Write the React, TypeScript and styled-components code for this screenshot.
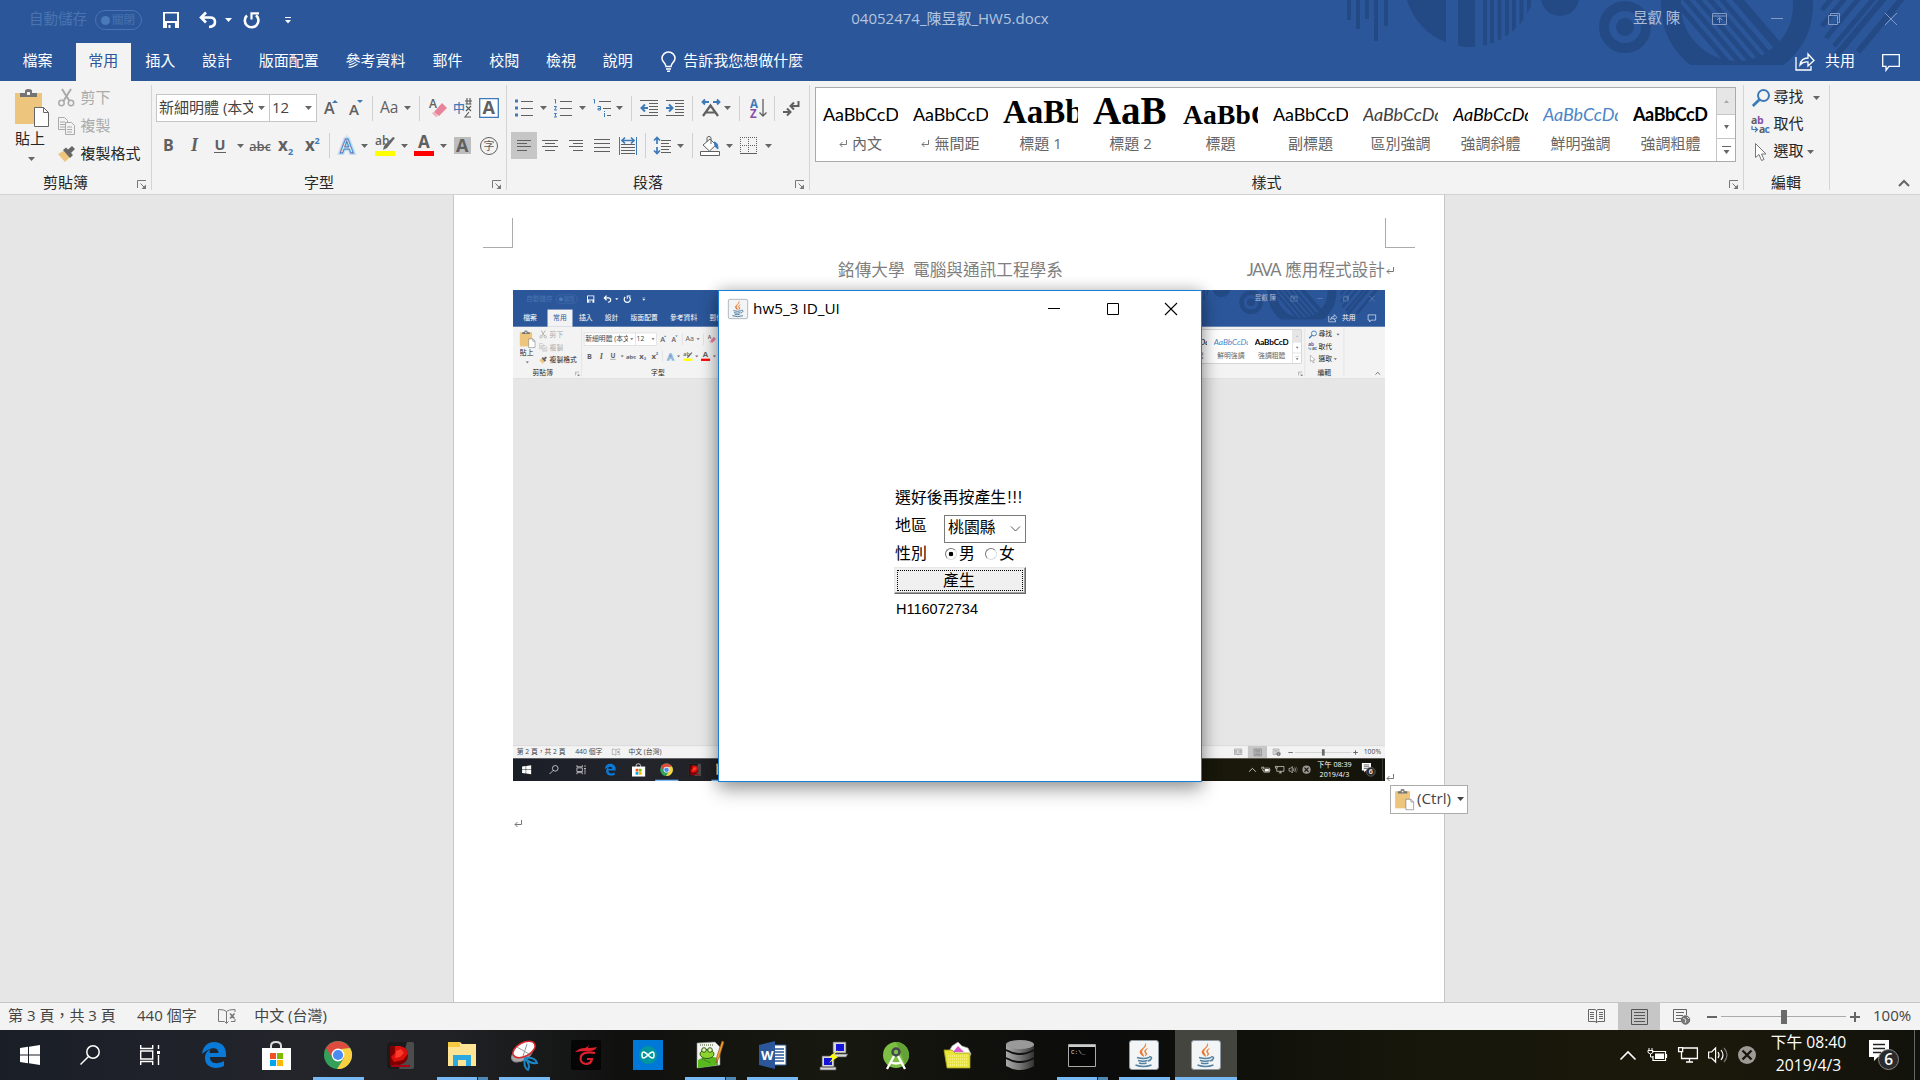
import React from "react";
import styled, { createGlobalStyle, css } from "styled-components";

const UI = `"Open Sans", "Noto Sans CJK TC", sans-serif`;
const INK = "#606060";
const BLUE = "#3d7ab8";

const Global = createGlobalStyle`
  *, *::before, *::after { box-sizing: border-box; }
  body { margin: 0; background: #e6e6e6; overflow: hidden; }
  svg { display: block; overflow: visible; flex: none; }
`;

/* ---------- shell ---------- */

const Screen = styled.div`
  width: 1920px;
  height: 1080px;
  display: flex;
  flex-direction: column;
  position: relative;
  overflow: hidden;
  font-family: ${UI};
  font-size: 15px;
  line-height: 1;
  color: #262626;
  white-space: nowrap;
  background: #e6e6e6;
`;
const Head = styled.header`
  position: relative;
  height: 81px;
  flex: none;
  background: #2b579a;
  color: #fff;
`;
const Decor = styled.svg`
  position: absolute;
  left: 1340px;
  top: 0;
`;
const TitleBar = styled.div`
  position: relative;
  display: grid;
  grid-template-columns: 700px 1fr 700px;
  height: 38px;
  align-items: center;
`;
const Quick = styled.div`
  display: flex;
  align-items: center;
  padding: 2px 0 0 29px;
  height: 38px;
`;
const AutoSave = styled.span`
  color: #4a74b0;
  font-size: 14.5px;
  width: 66px;
  padding-bottom: 2px;
`;
const Pill = styled.span`
  display: flex;
  align-items: center;
  gap: 2px;
  width: 47px;
  height: 20px;
  border: 1px solid #4a74b0;
  border-radius: 10px;
  color: #4a74b0;
  font-size: 11.5px;
  padding-left: 5px;
  margin-right: 21px;
  &::before {
    content: "";
    width: 9px;
    height: 9px;
    border-radius: 50%;
    background: #4a7ab8;
  }
`;
const DocName = styled.div`
  text-align: center;
  color: #b5c5de;
  padding: 0 20px 2px 0;
`;
const WinTools = styled.div`
  display: flex;
  align-items: center;
  padding-left: 413px;
  color: #a9bcd9;
  font-size: 14.5px;
`;
const UserName = styled.span`
  width: 50px;
  padding-bottom: 2px;
`;
const Tabs = styled.nav`
  position: relative;
  display: flex;
  height: 38px;
  margin-top: 5px;
  padding-left: 10px;
  gap: 1.8px;
`;
const Tab = styled.span<{ $on?: boolean; $first?: boolean }>`
  display: flex;
  align-items: center;
  height: 38px;
  padding: 0 12.5px 4px;
  color: #fff;
  ${(p) => p.$first && css`margin-right: 9px;`}
  ${(p) => p.$on && css`background: #f3f3f3; color: #2b579a;`}
`;
const Tell = styled.span`
  display: flex;
  align-items: center;
  gap: 7px;
  margin-left: 14px;
  > span { padding-bottom: 3px; }
`;
const Share = styled.span`
  display: flex;
  align-items: center;
  margin-left: auto;
  padding-right: 20px;
  gap: 10px;
  > span:nth-child(2) { padding-bottom: 3px; }
`;

/* ---------- ribbon ---------- */

const Ribbon = styled.section`
  position: relative;
  display: flex;
  height: 114px;
  flex: none;
  background: #f3f3f3;
  border-bottom: 1px solid #d2d2d2;
`;
const Group = styled.div<{ $w: number; $pad?: number }>`
  width: ${(p) => p.$w}px;
  padding: ${(p) => (p.$pad ?? 13)}px 0 0 4px;
  display: flex;
  flex-direction: column;
  height: 113px;
  background: linear-gradient(#d4d4d4, #d4d4d4) no-repeat right 4px / 1px 105px;
`;
const Row = styled.div<{ $h?: number; $top?: number }>`
  display: flex;
  align-items: center;
  height: ${(p) => p.$h ?? 28}px;
  margin-top: ${(p) => p.$top ?? 0}px;
`;
const GroupFoot = styled.div<{ $shift: boolean }>`
  display: grid;
  grid-template-columns: 1fr auto 1fr;
  align-items: center;
  height: 22px;
  margin-top: auto;
  padding-right: ${(p) => (p.$shift ? 25 : 6)}px;
  span { padding-bottom: 2px; }
  svg { justify-self: end; margin: 4px -20px 0 0; }
`;
const Tool = styled.span<{ $g?: number; $w: number }>`
  display: flex;
  flex: none;
  justify-content: center;
  margin-left: ${(p) => p.$g ?? 0}px;
  width: ${(p) => p.$w}px;
`;
const Sep = styled.span<{ $g?: number }>`
  flex: none;
  width: 1px;
  height: 25px;
  margin-left: ${(p) => p.$g ?? 8}px;
  background: #d0d0d0;
`;
const Combo = styled.span<{ $w: number }>`
  display: flex;
  align-items: center;
  width: ${(p) => p.$w}px;
  height: 28px;
  padding: 0 4px 0 2px;
  margin-right: -1px;
  background: #fff;
  border: 1px solid #c6c6c6;
  color: #444;
`;
const ComboText = styled.span`
  flex: 1;
  min-width: 0;
  height: 22px;
  line-height: 20px;
  overflow: hidden;
`;
const Pressed = styled(Tool)`
  height: 27px;
  align-items: center;
  background: #c6c6c6;
`;
const ClipBody = styled.div`
  display: flex;
  height: 83px;
`;
const Paste = styled.div`
  width: 54px;
  padding: 1px 0 0 11px;
  display: flex;
  flex-direction: column;
`;
const PasteText = styled.span`
  margin: 4px 0 11px;
`;
const Stack = styled.div<{ $pitch: number; $up?: number }>`
  display: flex;
  flex-direction: column;
  margin-top: -${(p) => p.$up ?? 0}px;
  > div { height: ${(p) => p.$pitch}px; flex: none; }
`;
const Cmd = styled.div<{ $off?: boolean }>`
  display: flex;
  align-items: center;
  gap: 5.5px;
  color: ${(p) => (p.$off ? "#aaa" : "#262626")};
`;
const Word = styled.span`
  width: 30px;
  padding-bottom: 2px;
`;
const Gallery = styled.div`
  display: flex;
  width: 921px;
  height: 75px;
  flex: none;
  margin-left: 1px;
  border: 1px solid #ababab;
  background: #fff;
`;
const StyleCell = styled.div`
  width: 90px;
  padding: 0 8px 0 7px;
  display: flex;
  flex-direction: column;
  align-items: center;
  overflow: hidden;
`;
const Preview = styled.div<{ $serif?: number; $lh?: number; $color?: string; $it?: boolean; $b?: boolean; $sp?: number }>`
  width: 75px;
  height: 47px;
  line-height: ${(p) => p.$lh ?? 52}px;
  overflow: hidden;
  color: ${(p) => p.$color ?? "#000"};
  font-family: ${(p) => (p.$serif ? `"Liberation Serif", serif` : `Lato, sans-serif`)};
  font-size: ${(p) => p.$serif ?? 18}px;
  font-weight: ${(p) => (p.$serif || p.$b ? 700 : 400)};
  font-style: ${(p) => (p.$it ? "italic" : "normal")};
  letter-spacing: ${(p) => p.$sp ?? -0.1}px;
`;
const StyleName = styled.div`
  display: flex;
  align-items: center;
  gap: 5px;
  color: #666;
  line-height: 17px;
`;
const Scroller = styled.div`
  width: 19px;
  display: grid;
  grid-template-rows: 26px 24px 23px;
  border-left: 1px solid #c6c6c6;
  > span { display: grid; place-items: center; }
  > span + span { border-top: 1px solid #c6c6c6; }
  > span:first-child { background: #e6e6e6; }
`;
const Collapse = styled.span`
  margin: auto 10px 7px auto;
`;

/* ---------- document ---------- */

const Canvas = styled.main`
  position: relative;
  flex: 1;
  display: flex;
  justify-content: flex-start;
  padding-left: 453px;
  overflow: hidden;
`;
const Page = styled.article`
  width: 992px;
  background: #fff;
  border: solid #c6c6c6;
  border-width: 0 1px;
  padding-top: 23px;
`;
const Marks = styled.div`
  display: flex;
  justify-content: space-between;
  margin: 0 29px;
`;
const Mark = styled.span<{ $right?: boolean }>`
  width: 30px;
  height: 30px;
  border-bottom: 1px solid #ababab;
  ${(p) => (p.$right ? css`border-left: 1px solid #ababab;` : css`border-right: 1px solid #ababab;`)}
`;
const PageHeader = styled.div`
  display: flex;
  align-items: center;
  height: 42px;
  padding: 2px 0 0 384px;
  color: #7f7f7f;
  font-size: 16.65px;
  font-family: Lato, "Noto Sans CJK TC", sans-serif;
`;
const HeaderRight = styled.span`
  margin-left: auto;
  padding-right: 50px;
  display: flex;
  align-items: center;
  gap: 1px;
`;
const Caps = styled.span`
  letter-spacing: -1.4px;
  margin-right: 4px;
`;
const PictureLine = styled.div`
  display: flex;
  align-items: flex-end;
  padding-left: 59px;
  gap: 1px;
`;
const Picture = styled.div`
  width: 872px;
  height: 491px;
  overflow: hidden;
`;
const Shrink = styled.div`
  width: 1920px;
  height: 1080px;
  transform: scale(0.4542, 0.4547);
  transform-origin: 0 0;
`;
const Para = styled.div`
  padding: 39px 0 0 60px;
`;
const PasteTag = styled.div`
  position: absolute;
  left: 1390px;
  top: 590px;
  width: 78px;
  height: 29px;
  display: flex;
  align-items: center;
  gap: 3px;
  padding: 0 0 1px 4px;
  border: 1px solid #ababab;
  background: #fff;
  color: #444;
  font-size: 15.2px;
`;

/* ---------- status bar and taskbar ---------- */

const Status = styled.footer`
  display: flex;
  align-items: center;
  height: 28px;
  flex: none;
  padding-left: 8px;
  border-top: 1px solid #c6c6c6;
  background: #f3f3f3;
  color: #444;
`;
const StatusText = styled.span<{ $w?: number }>`
  width: ${(p) => (p.$w ? `${p.$w}px` : "auto")};
  padding-bottom: 3px;
`;
const Right = styled.div`
  display: flex;
  align-items: center;
  margin-left: auto;
  height: 100%;
`;
const ViewOn = styled.span`
  width: 42px;
  height: 27px;
  display: grid;
  place-items: center;
  margin: 0 13px;
  background: #c6c6c6;
`;
const Track = styled.span`
  width: 125px;
  height: 14px;
  margin: 0 4px;
  display: grid;
  place-items: center;
  background: linear-gradient(#ababab, #ababab) no-repeat center / 100% 1px;
  &::after { content: ""; width: 6px; height: 14px; background: #6a6a6a; }
`;
const Zoomed = styled.span`
  width: 47px;
  margin-left: 13px;
  padding-bottom: 2px;
`;
const Taskbar = styled.div`
  display: flex;
  height: 50px;
  flex: none;
  background: linear-gradient(90deg, #1a1e27 0, #23252b 300px, #202124 460px, #10110f 620px, #17180f 830px, #0b0c0b 1100px, #16160b 1400px, #1b190b 1700px, #12120c 1920px);
  color: #fff;
`;
const Sys = styled.span`
  width: 60px;
  height: 50px;
  display: grid;
  place-items: center;
`;
const TaskApp = styled.span<{ $run?: 0 | 1 | 2; $on?: boolean }>`
  width: 62px;
  height: 50px;
  display: grid;
  place-items: center;
  position: relative;
  &::after {
    content: "";
    position: absolute;
    bottom: 0;
    left: ${(p) => (p.$on ? 0 : 6)}px;
    width: ${(p) => (p.$on ? 62 : p.$run ? 51 : 0)}px;
    height: 3px;
    background: ${(p) => (p.$run === 2 ? "linear-gradient(90deg,#76b9f5 40px,#222 40px,#222 41px,#4f88b5 41px)" : "#76b9f5")};
  }
  ${(p) => p.$on && css`background: #44453e;`}
`;
const Apps = styled.div`
  display: flex;
  padding-left: 3px;
`;
const Tray = styled.div`
  display: flex;
  align-items: center;
  margin-left: auto;
  height: 50px;
`;
const Clock = styled.div`
  width: 104px;
  display: flex;
  flex-direction: column;
  align-items: center;
  gap: 7px;
  padding: 0 0 1px 1px;
  font-size: 15.7px;
`;
const EdgeLine = styled.span`
  width: 6px;
  height: 50px;
  border-left: 1px solid #666;
  margin-left: 15px;
`;

/* ---------- java window ---------- */

const Window = styled.section`
  position: absolute;
  left: 718px;
  top: 290px;
  width: 484px;
  height: 492px;
  border: 1px solid #1a7fd4;
  background: #fff;
  box-shadow: 0 8px 18px rgba(0, 0, 0, 0.32), 0 0 14px rgba(0, 0, 0, 0.22);
  color: #000;
  font-family: ${UI};
  line-height: 1;
  white-space: nowrap;
`;
const WinHead = styled.div`
  display: flex;
  align-items: center;
  height: 36px;
  padding-left: 9px;
  svg + svg { margin-left: 46.5px; }
`;
const WinTitle = styled.span`
  width: 295px;
  margin-left: 5px;
  font-size: 15.3px;
  padding-bottom: 1px;
`;
const Form = styled.div`
  width: 132px;
  margin: 156px 0 0 175px;
  font-family: "Liberation Sans", "Noto Sans CJK TC", sans-serif;
  font-size: 15.9px;
`;
const Line = styled.div<{ $h: number; $drop?: number }>`
  display: flex;
  align-items: center;
  height: ${(p) => p.$h}px;
  padding: ${(p) => p.$drop ?? 0}px 0 0 1px;
`;
const Bangs = styled.span`
  letter-spacing: 0.9px;
  margin-left: 1px;
`;
const Key = styled.span<{ $up?: number }>`
  width: 49px;
  padding-bottom: ${(p) => p.$up ?? 0}px;
`;
const Select = styled.span`
  display: flex;
  align-items: center;
  justify-content: space-between;
  width: 82px;
  height: 28px;
  padding: 0 5px 1px 3px;
  border: 1px solid #7a7a7a;
  svg { margin-top: 2px; }
`;
const Radio = styled.span<{ $on?: boolean }>`
  width: 12px;
  height: 12px;
  margin: 0 2px 6px 1px;
  border-radius: 50%;
  border: 1.5px solid;
  border-color: #777 #ddd #ddd #777;
  background: ${(p) => (p.$on ? "radial-gradient(circle, #000 0 2px, #fff 2.6px)" : "#fff")};
`;
const Choice = styled.span`
  width: 25px;
  padding-bottom: 5px;
`;
const Push = styled.div`
  height: 27px;
  padding: 2px;
  background: #f0f0f0;
  border: 1px solid;
  border-color: #e8e8e8 #696969 #696969 #e8e8e8;
  box-shadow: inset -1px -1px #a0a0a0;
  margin-bottom: 5px;
`;
const PushFocus = styled.span`
  display: flex;
  justify-content: center;
  height: 21px;
  line-height: 19px;
  border: 1px dotted #000;
  padding-right: 2px;
`;
const Result = styled.div`
  padding-left: 2px;
  font-size: 14.5px;
  line-height: 20px;
`;

/* ---------- icons ---------- */

const Caret = ({ g = 6, c = "#666" }: { g?: number; c?: string }) => (
  <Tool $g={g} $w={7}><svg width="7" height="4"><path d="M0 0h7L3.500 4z" fill={c} /></svg></Tool>
);
const Ret = () => (
  <svg width="8" height="7" fill="none" stroke="#777"><path d="M7.500 0v4.500H1M3.500 2L1 4.500 3.500 7" /></svg>
);
const Launcher = () => (
  <svg width="10" height="10" fill="none" stroke="#777"><path d="M.5 8V.5H9M3.500 3.500l5 5" /><path d="M9 4.500V9H4.500z" fill="#777" stroke="none" /></svg>
);
const Txt = ({ x = 0, y, s, c = INK, b = 700, i, f = "Open Sans", children }: any) => (
  <text x={x} y={y} fontSize={s} fill={c} fontWeight={b} fontStyle={i ? "italic" : undefined} fontFamily={`${f}, "Noto Sans CJK TC", sans-serif`}>{children}</text>
);
const Lines = ({ w, rows }: { w: number; rows: [number, number, number][] }) => (
  <svg width={w} height="18" stroke={INK}>{rows.map(([y, a, b]) => <path key={y} d={`M${a} ${y + 0.5}H${b}`} />)}</svg>
);
const Clipboard = ({ w, h }: { w: number; h: number }) => (
  <svg width={w} height={h} viewBox="0 0 34 38">
    <path d="M0 4h27v31H0z" fill="#edc57c" />
    <path d="M5 8V4h5V2q0-2 3.500-2T17 2v2h5v4z" fill="#737373" /><path d="M12 3h3v3h-3z" fill="#f3f3f3" />
    <path d="M19.500 18.500h9l5 5v14h-14z" fill="#fff" stroke="#666" /><path d="M28.500 18.500v5h5" fill="none" stroke="#666" />
  </svg>
);
const Java = ({ s = 30 }: { s?: number }) => (
  <svg width={s} height={s} viewBox="0 0 30 30">
    <rect x=".5" y=".5" width="29" height="29" rx="2.500" fill="#f2f4f6" stroke="#8d9aa6" />
    <path d="M16.500 3.500c2 4-6 6-3 10 1.500 2 1 3 1 3-4-3-5-5-1-8 2-2 3-3 3-5zM18.500 8.500c-4 2-3 3-2 5 .8 1.500-.5 2.500-.5 2.500 4-2 .5-3.500.5-4.500s1-2 2-3z" fill="#e7762c" stroke="#e7762c" strokeWidth=".5" />
    <path d="M8 17.500q7 2 12 0M9 20.500q6 1.500 9.500 0M10 23q4 1.200 7.500 0M20 17c4-1 3 3-1 4M6.500 25q8 3 16 0" fill="none" stroke="#5382a1" strokeWidth="1.500" />
  </svg>
);

function Decoration() {
  return (
    <Decor width="580" height="81" viewBox="1340 0 580 81" fill="#244a86">
      <defs>
        <clipPath id="orb"><circle cx="1470" cy="-18.700" r="65.700" /></clipPath>
        <clipPath id="bowl"><path d="M1640 0h200v65h-200z" /></clipPath>
        <clipPath id="bowlIn"><circle cx="1737" cy="5" r="57" /></clipPath>
        <clipPath id="corner"><path d="M1820 0h100v60h-100z" /></clipPath>
      </defs>
      <path d="M1347 0h4v20h-4zM1356 0h4v29h-4zM1365 0h4v19h-4zM1374 0h4v41h-4zM1384 0h4v26h-4z" />
      <g clipPath="url(#orb)"><path d="M1400 0h46v50h-46zM1458 0h17v50h-17zM1483 0h4v50h-4zM1490 0h4v50h-4zM1497.500 0h4v50h-4zM1505 0h4v50h-4zM1512 0h4v50h-4zM1519.500 0h4v50h-4zM1527 0h4v50h-4z" /></g>
      <circle cx="1560" cy="-3" r="19" />
      <circle cx="1625" cy="27" r="21" fill="none" stroke="#244a86" strokeWidth="10" /><circle cx="1625" cy="27" r="9" />
      <g clipPath="url(#bowl)"><circle cx="1737" cy="5" r="66" fill="none" stroke="#244a86" strokeWidth="20" /></g>
      <g clipPath="url(#bowlIn)" stroke="#244a86" strokeWidth="5"><path d="M1670-5l60 70M1682-5l60 70M1694-5l60 70M1706-5l60 70M1718-5l60 70" /><path d="M1734-5l60 70" strokeWidth="9" /></g>
      <g clipPath="url(#corner)" stroke="#244a86" strokeWidth="5"><path d="M1822 10l10-12M1822 26l24-29M1826 38l34-41M1834 46l42-50" /><path d="M1834 58l52-62M1858 52l46-56" strokeWidth="6" /></g>
    </Decor>
  );
}

function Header() {
  return (
    <Head>
      <Decoration />
      <TitleBar>
        <Quick>
          <AutoSave>自動儲存</AutoSave>
          <Pill>關閉</Pill>
          <svg width="16" height="16" fill="#fff" fillRule="evenodd"><path d="M0 0h16v16H0zM2 1.500v7.500h12V1.500zM4 11v5h1.500v-3h2v3H12v-5z" /></svg>
          <Tool $g={20} $w={18}><svg width="18" height="16" fill="none" stroke="#fff" strokeWidth="2.600"><path d="M2 5.500h9q5 0 5 4.500 0 4.500-6 5M7 .5l-5 5 5 5" /></svg></Tool>
          <Caret g={8} c="#fff" />
          <Tool $g={11} $w={17}><svg width="17" height="17" fill="none" stroke="#fff" strokeWidth="2.600"><path d="M4 3.500a6.800 6.800 0 1 0 9-.2" /><path d="M8.500 7.500V1.300H16" strokeWidth="2.200" /></svg></Tool>
          <Tool $g={24} $w={7}><svg width="6" height="7" fill="#fff"><path d="M0 0h6v1H0zM0 3h6L3 6.500z" /></svg></Tool>
        </Quick>
        <DocName>04052474_陳昱叡_HW5.docx</DocName>
        <WinTools>
          <UserName>昱叡 陳</UserName>
          <Tool $g={29} $w={15}><svg width="15" height="12" fill="none" stroke="#819bc6"><path d="M.5.5h14v11H.5zM.5 3h14M7.500 10V5M5 7l2.500-2.500L10 7" /></svg></Tool>
          <Tool $g={44} $w={12}><svg width="12" height="2"><path d="M0 0h12v1H0z" fill="#819bc6" /></svg></Tool>
          <Tool $g={45} $w={12}><svg width="12" height="12" fill="none" stroke="#819bc6"><path d="M.5 2.500h9v9h-9zM2.500 2V.5h9v9H10" /></svg></Tool>
          <Tool $g={45} $w={12}><svg width="12" height="12" stroke="#819bc6"><path d="M0 0l12 12M12 0L0 12" /></svg></Tool>
        </WinTools>
      </TitleBar>
      <Tabs>
        <Tab $first>檔案</Tab><Tab $on>常用</Tab>
        {["插入", "設計", "版面配置", "參考資料", "郵件", "校閱", "檢視", "說明"].map((t) => <Tab key={t}>{t}</Tab>)}
        <Tell>
          <svg width="15" height="20" fill="none" stroke="#fff" strokeWidth="1.500"><path d="M5 14.500C5 11 1 10 1 6.500a6.300 6.300 0 0 1 13 0C14 10 10 11 10 14.500zM5 17h5M6 19.200h3" /></svg>
          <span>告訴我您想做什麼</span>
        </Tell>
        <Share>
          <svg width="20" height="18" fill="none" stroke="#fff" strokeWidth="1.300"><path d="M1 4v13h15v-4M5 12q1-7 8-7V1l6 6.500-6 5.500V9q-5-.5-8 3z" /></svg>
          <span>共用</span>
          <Tool $g={17} $w={18}><svg width="18" height="17" fill="none" stroke="#fff" strokeWidth="1.300"><path d="M.7.7h16.600v11.600H7l-3 4v-4H.7z" /></svg></Tool>
        </Share>
      </Tabs>
    </Head>
  );
}

const styles: [string, string, any, boolean?][] = [
  ["內文", "AaBbCcD", {}, true],
  ["無間距", "AaBbCcD", {}, true],
  ["標題 1", "AaBb", { $serif: 33, $lh: 49, $sp: 0 }],
  ["標題 2", "AaB", { $serif: 39, $lh: 46 }],
  ["標題", "AaBbC", { $serif: 27.5, $lh: 54, $sp: 0.2 }],
  ["副標題", "AaBbCcD", {}],
  ["區別強調", "AaBbCcDd", { $it: true, $color: "#404040" }],
  ["強調斜體", "AaBbCcDd", { $it: true }],
  ["鮮明強調", "AaBbCcDd", { $it: true, $color: "#4a86c6" }],
  ["強調粗體", "AaBbCcD", { $b: true, $sp: -0.4 }],
];

function RibbonBar() {
  const foot = (t: string, l = true) => <GroupFoot $shift={l}><i /><span>{t}</span>{l ? <Launcher /> : <i />}</GroupFoot>;
  return (
    <Ribbon>
      <Group $w={152} $pad={7}>
        <ClipBody>
          <Paste>
            <Clipboard w={34} h={38} />
            <PasteText>貼上</PasteText>
            <Caret g={13} />
          </Paste>
          <Stack $pitch={28} $up={4}>
            <Cmd $off><svg width="17" height="18" fill="none" stroke="#aaa" strokeWidth="2"><path d="M4 0l7.500 12M13 0L5.500 12" /><circle cx="3.500" cy="14" r="2.700" strokeWidth="1.500" /><circle cx="13" cy="14" r="2.700" strokeWidth="1.500" /></svg><Word>剪下</Word></Cmd>
            <Cmd $off><svg width="17" height="18" fill="none" stroke="#aaa"><path d="M.5.5h6l3 3v9h-9zM2 5h5M2 7.500h5M2 10h5" /><path d="M7.500 5.500h6l3 3v9h-9z" fill="#f3f3f3" /><path d="M9 10h5M9 12.500h5M9 15h5" /></svg><Word>複製</Word></Cmd>
            <Cmd><svg width="17" height="16"><path d="M7 4l6 6-6 6-7-8z" fill="#edc57c" /><path d="M5 4l3-2.500 2 2L14 0l3 3-4 4 2 2-3 3z" fill="#666" /></svg><Word>複製格式</Word></Cmd>
          </Stack>
        </ClipBody>
        {foot("剪貼簿")}
      </Group>

      <Group $w={355}>
        <Row>
          <Combo $w={114}><ComboText>新細明體 (本文)</ComboText><Caret g={5} /></Combo>
          <Combo $w={48}><ComboText>12</ComboText><Caret g={2} /></Combo>
          <Tool $g={8} $w={17}><svg width="17" height="18"><Txt y={15} s={16} b={600}>A</Txt><path d="M8 4l3-3 3 3z" fill={BLUE} /></svg></Tool>
          <Tool $g={8} $w={16}><svg width="16" height="18"><Txt y={16} s={15} b={600}>A</Txt><path d="M8 1h6l-3 3z" fill={BLUE} /></svg></Tool>
          <Sep $g={7} />
          <Tool $g={8} $w={20}><svg width="20" height="16"><Txt x={-1} y={13} s={15.500} b={400}>Aa</Txt></svg></Tool><Caret g={3} />
          <Sep />
          <Tool $g={9} $w={18}><svg width="18" height="20"><Txt y={10} s={12} b={600}>A</Txt><path d="M13 5l5 5-8 8-5-4z" fill="#e8849a" /><path d="M3 15l2-1 4 4-2 1z" fill="#f0a9b8" /></svg></Tool>
          <Tool $g={6} $w={20}><svg width="20" height="20"><Txt y={15} s={12} c={BLUE} b={500}>中</Txt><path d="M12 3h7M12.500 6h6M14 0v6M17 0v6M13 8l5 5M18 8l-5 5M16 14l-4 5h6" fill="none" stroke="#555" strokeWidth="1.100" /></svg></Tool>
          <Tool $g={6} $w={20}><svg width="20" height="20"><path d="M.7.7h18.600v18.600H.7z" fill="#fff" stroke={BLUE} strokeWidth="1.300" /><Txt x={3.500} y={16} s={18}>A</Txt></svg></Tool>
        </Row>
        <Row $h={27} $top={10}>
          <Tool $g={7} $w={10}><svg width="10" height="14"><Txt y={12} s={16}>B</Txt></svg></Tool>
          <Tool $g={17} $w={10}><svg width="10" height="14"><Txt x={1} y={12} s={18} i f="Liberation Serif">I</Txt></svg></Tool>
          <Tool $g={14} $w={12}><svg width="12" height="14"><Txt x={.5} y={11} s={14.500}>U</Txt><path d="M0 13.500h12" stroke={INK} /></svg></Tool>
          <Caret g={11} />
          <Tool $g={6} $w={20}><svg width="20" height="14"><Txt x={-1} y={12} s={13} b={600}>abc</Txt><path d="M0 8.500h20" stroke={INK} /></svg></Tool>
          <Tool $g={8} $w={16}><svg width="16" height="14"><Txt y={12} s={17}>x</Txt><Txt x={10} y={15.500} s={9} c={BLUE}>2</Txt></svg></Tool>
          <Tool $g={11} $w={15}><svg width="15" height="14"><Txt y={12} s={17}>x</Txt><Txt x={9.500} y={4.500} s={9} c={BLUE}>2</Txt></svg></Tool>
          <Sep $g={9} />
          <Tool $g={9} $w={16}><svg width="16" height="18"><text x="1" y="16" fontSize="20" fontWeight="600" fontFamily="Open Sans" fill="#fff" stroke="#c5dcf2" strokeWidth="4">A</text><text x="1" y="16" fontSize="20" fontWeight="600" fontFamily="Open Sans" fill="#fff" stroke={BLUE} strokeWidth="1">A</text></svg></Tool>
          <Caret />
          <Tool $g={7} $w={20}><svg width="20" height="20"><Txt y={9} s={12} b={600}>ab</Txt><path d="M18 1l2 1-8 10-4 2 1-4z" fill="#666" /><path d="M0 15h20v5H0z" fill="#ff0" /></svg></Tool>
          <Caret />
          <Tool $g={6} $w={20}><svg width="20" height="20"><Txt x={4} y={12} s={17}>A</Txt><path d="M0 15h20v5H0z" fill="red" /></svg></Tool>
          <Caret />
          <Tool $g={7} $w={17}><svg width="17" height="17"><path d="M0 0h17v17H0z" fill="#bdbdbd" /><Txt x={2} y={14.500} s={18}>A</Txt></svg></Tool>
          <Tool $g={9} $w={18}><svg width="18" height="18"><circle cx="9" cy="9" r="8.500" fill="none" stroke={INK} /><Txt x={3.500} y={13} s={11} b={400}>字</Txt></svg></Tool>
        </Row>
        {foot("字型")}
      </Group>

      <Group $w={303}>
        <Row>
          <Tool $g={4} $w={18}><svg width="18" height="18" stroke={INK}><path d="M6 2.500h12M6 9.500h12M6 16.500h12" /><path d="M0 2h3M0 9h3M0 16h3" stroke={BLUE} strokeWidth="3" /></svg></Tool><Caret g={7} />
          <Tool $g={7} $w={18}><svg width="18" height="18" stroke={INK}><path d="M6 2.500h12M6 9.500h12M6 16.500h12" /><path d="M.5.5h1v4M0 7.500h2.500L.5 11H3M0 14.500h2.500L1 16l1.500 2H0" fill="none" stroke={BLUE} /></svg></Tool><Caret g={7} />
          <Tool $g={7} $w={18}><svg width="18" height="18" stroke={INK}><path d="M6 2.500h12M10 9.500h8M14 16.500h4" /><path d="M.5.5h1v4M4.500 7.500h3V11H5V9.500h2.500M11.500 12v1M11.500 14v4" fill="none" stroke={BLUE} /></svg></Tool><Caret g={5} />
          <Sep />
          <Tool $g={8} $w={18}><svg width="18" height="18" stroke={INK} fill="none"><path d="M0 1.500h18M9 4.500h9M9 7.500h9M9 10.500h9M9 13.500h9M0 16.500h18" /><path d="M8 9H1.500M5 5.500L1.500 9 5 12.500" stroke={BLUE} strokeWidth="2" /></svg></Tool>
          <Tool $g={8} $w={18}><svg width="18" height="18" stroke={INK} fill="none"><path d="M0 1.500h18M9 4.500h9M9 7.500h9M9 10.500h9M9 13.500h9M0 16.500h18" /><path d="M0 9h6.500M3 5.500L6.500 9 3 12.500" stroke={BLUE} strokeWidth="2" /></svg></Tool>
          <Sep />
          <Tool $g={8} $w={20}><svg width="20" height="18" fill="none"><path d="M8 3H1.500M4 .5L1.500 3 4 5.500M12 3h6.500M16 .5L18.500 3 16 5.500" stroke={BLUE} strokeWidth="1.800" /><path d="M2 17L9.500 6.500 17 17M5 13.500h9" stroke={INK} strokeWidth="2.200" /></svg></Tool><Caret g={3} />
          <Sep />
          <Tool $g={10} $w={16}><svg width="16" height="19" fill="none"><Txt y={9} s={11.500} c={BLUE}>A</Txt><Txt y={19} s={11.500} c="#8b4fa8">Z</Txt><path d="M13 0v17M9.500 13.500L13 17l3.500-3.500" stroke={INK} strokeWidth="1.300" /></svg></Tool>
          <Sep />
          <Tool $g={8} $w={16}><svg width="16" height="14" fill="none" stroke={INK} strokeWidth="2"><path d="M15.500 0v5H8M11 1.500L7.500 5 11 8.500M0 11h7M4 7.500L7.500 11 4 14.500" /></svg></Tool>
        </Row>
        <Row $h={27} $top={10}>
          <Pressed $w={26}><Lines w={14} rows={[[3, 0, 14], [6, 0, 10], [9, 0, 14], [13, 0, 10]]} /></Pressed>
          <Tool $g={5} $w={16}><Lines w={16} rows={[[3, 0, 16], [6, 3, 13], [9, 0, 16], [13, 3, 13]]} /></Tool>
          <Tool $g={11} $w={14}><Lines w={14} rows={[[3, 0, 14], [6, 4, 14], [9, 0, 14], [13, 4, 14]]} /></Tool>
          <Tool $g={11} $w={16}><Lines w={16} rows={[[2, 0, 16], [6, 0, 16], [10, 0, 16], [14, 0, 16]]} /></Tool>
          <Tool $g={9} $w={18}><svg width="18" height="18" fill="none" stroke={INK}><path d="M.5 0v18M17.500 0v18" stroke={BLUE} /><path d="M3 3.500h12M6 .5l-3 3 3 3M12 .5l3 3-3 3" stroke={BLUE} strokeWidth="1.700" /><path d="M2 7.500h14M2 10.500h14M2 13.500h14M2 16.500h14" /></svg></Tool>
          <Sep />
          <Tool $g={8} $w={17}><svg width="17" height="19" fill="none" stroke={INK}><path d="M7 4.500h10M7 7.500h8M7 10.500h10M7 13.500h8M7 16.500h10" /><path d="M3 1.500V8M0 4.500l3-3 3 3M3 11v6.500M0 14.500l3 3 3-3" stroke={BLUE} strokeWidth="1.700" /></svg></Tool><Caret />
          <Sep />
          <Tool $g={7} $w={20}><svg width="20" height="20" fill="none" stroke={INK}><path d="M10 3l6 6-6.500 6L3 9z" fill="#fff" /><path d="M7 6V1.500q2-2.500 4 0V8" /><path d="M14 6q4 0 4 7l-2.500-2z" fill={BLUE} stroke={BLUE} /><path d="M.5 15.500h19v4H.5z" fill="#fff" /></svg></Tool><Caret />
          <Tool $g={7} $w={17}><svg width="17" height="17" fill="none" stroke={INK}><path d="M.5 0v16M8.500 0v16M16.500 0v16M0 .5h17M0 8.500h17" strokeDasharray="1 1" /><path d="M0 16.500h17" /></svg></Tool><Caret g={8} />
        </Row>
        {foot("段落")}
      </Group>

      <Group $w={934} $pad={6}>
        <Gallery>
          {styles.map(([name, sample, look, mark]) => (
            <StyleCell key={name}>
              <Preview {...look}>{sample}</Preview>
              <StyleName>{mark && <Ret />}{name}</StyleName>
            </StyleCell>
          ))}
          <Scroller>
            <span><svg width="5" height="3"><path d="M0 3h5L2.500 0z" fill="#aaa" /></svg></span>
            <span><svg width="5" height="4"><path d="M0 0h5L2.500 4z" fill="#666" /></svg></span>
            <span><svg width="9" height="8" fill="#666"><path d="M0 0h9v1H0zM1.500 4h6l-3 4z" /></svg></span>
          </Scroller>
        </Gallery>
        {foot("樣式")}
      </Group>

      <Group $w={86} $pad={3}>
        <Stack $pitch={27}>
          <Cmd><Tool $g={3} $w={19}><svg width="18" height="18" fill="none" stroke={BLUE} strokeWidth="2"><circle cx="11.500" cy="6.500" r="5.500" /><path d="M7.500 10.500L.8 17" strokeWidth="2.800" /></svg></Tool><Tool $g={-2} $w={30}><Word>尋找</Word></Tool><Caret g={4} /></Cmd>
          <Cmd><Tool $g={3} $w={19}><svg width="19" height="18"><Txt y={8} s={10.500}>a</Txt><Txt x={6} y={8} s={10.500} c="#8b4fa8">b</Txt><Txt x={8} y={17} s={10.500}>a</Txt><Txt x={13.500} y={17} s={10.500} c={BLUE}>c</Txt><path d="M1 10v3.500h5M4 11l2.500 2.500L4 16" fill="none" stroke={BLUE} strokeWidth="1.200" /></svg></Tool><Tool $g={-2} $w={30}><Word>取代</Word></Tool></Cmd>
          <Cmd><Tool $g={3} $w={19}><svg width="11" height="18"><path d="M.5.5v14l3.500-3 2.500 6 2.500-1-2.500-5.500h4.500z" fill="#fff" stroke="#777" /></svg></Tool><Tool $g={-2} $w={30}><Word>選取</Word></Tool><Caret g={-2} /></Cmd>
        </Stack>
        {foot("編輯", false)}
      </Group>
      <Collapse><svg width="12" height="8" fill="none" stroke="#666" strokeWidth="2"><path d="M1 7l5-5 5 5" /></svg></Collapse>
    </Ribbon>
  );
}

function StatusBar({ page }: { page: number }) {
  return (
    <Status>
      <StatusText $w={129}>第 {page} 頁，共 {page} 頁</StatusText>
      <StatusText $w={81}>440 個字</StatusText>
      <Tool $w={18}><svg width="18" height="15" fill="none" stroke="#777"><path d="M8.500 14V2.500Q7 .5.500.5v12h6l2 2 2-2M8.500 2.500Q10 .5 17 .5V3M17 10v2.500h-4" /><path d="M12 4.500l4.500 5M16.500 4.500l-4.500 5" strokeWidth="1.600" /></svg></Tool>
      <Tool $g={17} $w={75}><StatusText>中文 (台灣)</StatusText></Tool>
      <Right>
        <svg width="17" height="15" fill="none" stroke="#666"><path d="M8.500 14V1.500L7 .5H.5v12H7l1.500 1 1.500-1h6.500V.5H10l-1.500 1M2 3.500h4M2 5.500h4M2 7.500h4M2 9.500h4M11 3.500h4M11 5.500h4M11 7.500h4M11 9.500h4" /></svg>
        <ViewOn><svg width="17" height="16" fill="none" stroke="#555"><path d="M.5.5h16v15H.5zM3 3.500h11M3 6.500h11M3 9.500h11M3 12.500h11" /></svg></ViewOn>
        <svg width="17" height="16" fill="none" stroke="#666"><path d="M8 12.500H.5V.5h13V6M3 3.500h8M3 6.500h7M3 9.500h5" /><circle cx="12.500" cy="11" r="4.200" fill="#777" /><path d="M10 9l3 2-1 3M14 8l2 2" stroke="#ddd" /></svg>
        <Tool $g={17} $w={10}><svg width="10" height="2"><path d="M0 0h10v2H0z" fill="#666" /></svg></Tool>
        <Track />
        <svg width="10" height="10"><path d="M4 0h2v4h4v2H6v4H4V6H0V4h4z" fill="#666" /></svg>
        <Zoomed>100%</Zoomed>
      </Right>
    </Status>
  );
}

const Dock = ({ time }: { time: string }) => (
  <Taskbar>
    <Sys><svg width="20" height="20" fill="#fff"><path d="M0 3l8-1.200V9.500H0zM9 1.700L20 0v9.500H9zM0 10.500h8v7.700L0 17zM9 10.500h11V20L9 18.300z" /></svg></Sys>
    <Sys><svg width="20" height="20" fill="none" stroke="#fff" strokeWidth="1.500"><circle cx="13" cy="7" r="6.200" /><path d="M8.500 11.500L.5 19.500" /></svg></Sys>
    <Sys><svg width="20" height="20" fill="none" stroke="#fff" strokeWidth="1.400"><path d="M.7 0v3.500h12V0M.7 6h12v8h-12zM.7 20v-3.500h12V20M18.500 0v4M18.500 10v10" /><path d="M17 6h3v3h-3z" fill="#fff" stroke="none" /></svg></Sys>
    <Apps>
      <TaskApp><svg width="24" height="26"><path d="M0 12C1 4 6 0 12 0c8 0 12 5.500 12 12v3H8c0 8 9 7 14 4v5c-8 4-19 2-19-8 0-5 3-8 6-9-1 1-1.500 2-1.500 4h9c0-6-8-7-16.500 1z" fill="#0a7ad8" /></svg></TaskApp>
      <TaskApp><svg width="29" height="29"><path d="M9 8V5q0-4 5-4t5 4v3" fill="none" stroke="#ddd" strokeWidth="2" /><path d="M0 7h29v22H0z" fill="#fff" /><path d="M8 12h6v6H8z" fill="#f25022" /><path d="M15 12h6v6h-6z" fill="#7fba00" /><path d="M8 19h6v6H8z" fill="#00a4ef" /><path d="M15 19h6v6h-6z" fill="#ffb900" /></svg></TaskApp>
      <TaskApp $run={1}><svg width="28" height="28" viewBox="0 0 28 28"><circle cx="14" cy="14" r="14" fill="#34a05a" /><path d="M1.900 7A14 14 0 0 1 26 7L14 8.500 8.500 17z" fill="#dd4b3e" /><path d="M26.100 7A14 14 0 0 1 13 28l7-11-3-9z" fill="#fdd041" /><circle cx="14" cy="14" r="6.400" fill="#fff" /><circle cx="14" cy="14" r="5.100" fill="#4b8bf4" /></svg></TaskApp>
      <TaskApp><svg width="27" height="27"><rect width="27" height="27" rx="2" fill="#4c4c4c" /><path d="M0 2q0-2 2-2h18L12 27H2q-2 0-2-2z" fill="#1a1a1a" /><path d="M3 4h9q9 1 9 9t-9 10H3z" fill="#7d0000" /><path d="M8 4h5q8 2 8 8l-5 6-9 2-3-5 4-4z" fill="#d8110d" /><path d="M9 9l5-2 3 4-4 4-5 1z" fill="#ff3a2a" /><path d="M4 24h19" stroke="#a01" strokeWidth="2" /></svg></TaskApp>
      <TaskApp $run={2}><svg width="28" height="26"><path d="M0 0h12l2 2h14v22H0z" fill="#ffe593" /><path d="M0 0h12v5H0z" fill="#f6c940" /><path d="M5 13h18v11h-5v-6H10v6H5z" fill="#2da9e0" /></svg></TaskApp>
      <TaskApp $run={1}><svg width="28" height="29" fill="none"><ellipse cx="12" cy="13" rx="11.500" ry="6.500" transform="rotate(-30 12 13)" fill="#aaa" stroke="#888" /><ellipse cx="14" cy="8.500" rx="12" ry="6.800" transform="rotate(-28 14 8.500)" fill="#fff" stroke="#d7292d" strokeWidth="1.500" /><path d="M7 6l12 7M17 3l-4 12" stroke="#999" /><path d="M15 17q10-1 12 5-7 1-12-5 6 8 3 12-5-3-3-12" stroke="#1c86c6" strokeWidth="2" /></svg></TaskApp>
      <TaskApp><svg width="30" height="30"><rect width="30" height="30" rx="2" fill="#050505" /><path d="M4 12q4-4 10-4 3-1 4-3l-1 3q5 0 9-1-2 4-8 4-8 0-14 1z" fill="#e21f2d" /><path d="M24 13q-11-2-14 3-2 7 5 8 5 0 6-5h-5" fill="none" stroke="#e21f2d" strokeWidth="2.200" /></svg></TaskApp>
      <TaskApp><svg width="30" height="30"><path d="M0 0h30v30H0z" fill="#0078d7" /><circle cx="15" cy="15" r="9" fill="#00979d" /><path d="M15 15q-6-6-6 0t6 0q6-6 6 0t-6 0" fill="none" stroke="#fff" strokeWidth="1.500" /></svg></TaskApp>
      <TaskApp $run={2}><svg width="29" height="28"><path d="M1 2l18-1 5 5v18L1 27z" fill="#f4f4f4" stroke="#888" strokeWidth=".6" /><path d="M2 19q9-6 20-2v7L2 27z" fill="#58b81f" /><ellipse cx="11" cy="13" rx="7" ry="4.500" fill="#8bd42e" stroke="#365a17" /><circle cx="8" cy="9" r="2.300" fill="#d9f5b0" stroke="#365a17" /><circle cx="14" cy="9" r="2.300" fill="#d9f5b0" stroke="#365a17" /><path d="M6 18l9 4M4 4h14" stroke="#365a17" strokeDasharray="1 1" /><path d="M26 0l2 1-5 16-3 5 1-7z" fill="#f0a030" stroke="#8a4a12" strokeWidth=".6" /></svg></TaskApp>
      <TaskApp $run={1}><svg width="27" height="28"><path d="M14 4h13v20H14z" fill="#fff" stroke="#2b579a" /><path d="M16 8h9M16 11h9M16 14h9M16 17h9M16 20h9" stroke="#2b579a" strokeWidth="1.300" /><path d="M0 4l16-4v28L0 24z" fill="#2b579a" /><text x="2" y="19" fontFamily="Open Sans" fontWeight="700" fontSize="13" fill="#fff">W</text></svg></TaskApp>
      <TaskApp><svg width="29" height="29"><g fill="#d8d8d8" stroke="#555" strokeWidth=".7"><path d="M13 1h13v11H13zM12 13h16l-2 3H11zM2 15h12v11H2zM0 26h16v3H0z" /></g><path d="M16 3h8v7h-8zM4 17h8v7H4z" fill="#1414d8" /><path d="M18 9l-9 7 4 1-4 5 9-6-4-2z" fill="#ff0" /></svg></TaskApp>
      <TaskApp><svg width="27" height="29"><circle cx="13" cy="14" r="13" fill="#7cbf42" /><path d="M13 1a13 13 0 0 1 9 22z" fill="#63a336" /><circle cx="13" cy="11" r="3.500" fill="none" stroke="#445" strokeWidth="2.500" /><path d="M11 15L4 28M15 15l7 13M7 21q6 3 12 0" fill="none" stroke="#fff" strokeWidth="2.300" /></svg></TaskApp>
      <TaskApp><svg width="28" height="28"><path d="M4 12L8 5l6-4 4 4 6 2 3 6-2 4z" fill="#fff" stroke="#999" strokeWidth=".7" /><path d="M9 11l5-6 6 6z" fill="#d65bd0" /><path d="M0 9h8l3 3h14l1 2v13H3z" fill="#e9e438" stroke="#a39f20" strokeWidth=".8" /><path d="M4 15h20M4 18h20M4 21h20M4 24h20" stroke="#fffcae" strokeDasharray="1 1" /></svg></TaskApp>
      <TaskApp><svg width="28" height="30"><defs><linearGradient id="steel"><stop stopColor="#aaa" /><stop offset=".5" stopColor="#777" /><stop offset="1" stopColor="#333" /></linearGradient></defs><path d="M0 4h28v22q-14 8-28 0z" fill="url(#steel)" /><path d="M0 10q14 8 28 0M0 18q14 8 28 0" fill="none" stroke="#111" strokeWidth="2" /><ellipse cx="14" cy="4.500" rx="14" ry="4.500" fill="#999" /></svg></TaskApp>
      <TaskApp $run={2}><svg width="28" height="23"><path d="M.5.5h27v22H.5z" fill="#050505" stroke="#aaa" /><path d="M1 1h26v2H1z" fill="#ccc" /><text x="3" y="10" fontSize="6" fill="#ddd" fontFamily="Liberation Mono">C:\_</text></svg></TaskApp>
      <TaskApp $run={1}><Java /></TaskApp>
      <TaskApp $run={1} $on><Java /></TaskApp>
    </Apps>
    <Tray>
      <svg width="16" height="9" fill="none" stroke="#fff" strokeWidth="1.600"><path d="M.5 8.500L8 1l7.500 7.500" /></svg>
      <Tool $g={12} $w={20}><svg width="20" height="14" fill="none" stroke="#fff"><path d="M4 3.500h13.500v9H5V8M18.500 6v4" strokeWidth="1.200" /><path d="M7 5.500h9v5.500H7z" fill="#fff" stroke="none" /><path d="M1 0v2.500M4 0v2.500M0 2.500h5v2q-2.500 3-5 0zM2.500 6v3H5" /></svg></Tool>
      <Tool $g={10} $w={20}><svg width="20" height="16" fill="none" stroke="#fff" strokeWidth="1.300"><path d="M5 1h14.400v10.500H3.500V5M11.500 11.500V15M8 15h7" /><path d="M.6.600h4v4h-4z" /></svg></Tool>
      <Tool $g={10} $w={20}><svg width="20" height="16" fill="none" stroke="#fff" strokeWidth="1.200"><path d="M.6 5h3l4-4v14l-4-4h-3zM10 5q2 3 0 6M13 3q4 5 0 10" /><path d="M16 1q6 7 0 14" stroke="#777" /></svg></Tool>
      <Tool $g={10} $w={18}><svg width="18" height="18"><circle cx="9" cy="9" r="9" fill="#9b9a94" /><path d="M4.500 4.500l9 9M13.500 4.500l-9 9" stroke="#181810" strokeWidth="2.400" /></svg></Tool>
      <Clock><span>下午 {time}</span><span>2019/4/3</span></Clock>
      <Tool $g={9} $w={30}><svg width="30" height="30"><path d="M0 0h20v17H9l-4 4v-4H0z" fill="#fff" /><path d="M4 4.500h12M4 8.500h12M4 12.500h8" stroke="#222" strokeWidth="1.400" /><circle cx="19.500" cy="19.500" r="10" fill="#2b2b2b" stroke="#888" /><text x="15.200" y="25" fontSize="15.500" fontWeight="600" fontFamily="Open Sans" fill="#fff">6</text></svg></Tool>
      <EdgeLine />
    </Tray>
  </Taskbar>
);

const Desktop = ({ page, time, children }: { page: number; time: string; children?: React.ReactNode }) => (
  <Screen>
    <Header />
    <RibbonBar />
    <Canvas>{children}</Canvas>
    <StatusBar page={page} />
    <Dock time={time} />
  </Screen>
);

const JavaWindow = () => (
  <Window>
    <WinHead>
      <Java s={20} />
      <WinTitle>hw5_3 ID_UI</WinTitle>
      <svg width="12" height="2"><path d="M0 0h12v1H0z" /></svg>
      <svg width="12" height="12" fill="none" stroke="#000"><path d="M.5.5h11v11H.5z" /></svg>
      <svg width="12" height="12" stroke="#000" strokeWidth="1.100"><path d="M0 0l12 12M12 0L0 12" /></svg>
    </WinHead>
    <Form>
      <Line $h={28} $drop={2}><span>選好後再按產生</span><Bangs>!!!</Bangs></Line>
      <Line $h={35}><Key $up={5}>地區</Key><Select>桃園縣<svg width="9" height="6" fill="none" stroke="#555"><path d="M0 .5l4.500 4.500L9 .5" /></svg></Select></Line>
      <Line $h={21}><Key $up={6}>性別</Key><Radio $on /><Choice>男</Choice><Radio /><Choice>女</Choice></Line>
      <Push><PushFocus>產生</PushFocus></Push>
      <Result>H116072734</Result>
    </Form>
  </Window>
);

export default function App() {
  return (
    <>
      <Global />
      <Desktop page={3} time="08:40">
        <Page>
          <Marks><Mark /><Mark $right /></Marks>
          <PageHeader>
            <span>銘傳大學&nbsp; 電腦與通訊工程學系</span>
            <HeaderRight><Caps>JAVA</Caps>應用程式設計<Ret /></HeaderRight>
          </PageHeader>
          <PictureLine>
            <Picture><Shrink><Desktop page={2} time="08:39" /></Shrink></Picture>
            <Ret />
          </PictureLine>
          <Para><Ret /></Para>
        </Page>
        <PasteTag><Clipboard w={19} h={21} />(Ctrl)<Caret g={3} c="#444" /></PasteTag>
      </Desktop>
      <JavaWindow />
    </>
  );
}
